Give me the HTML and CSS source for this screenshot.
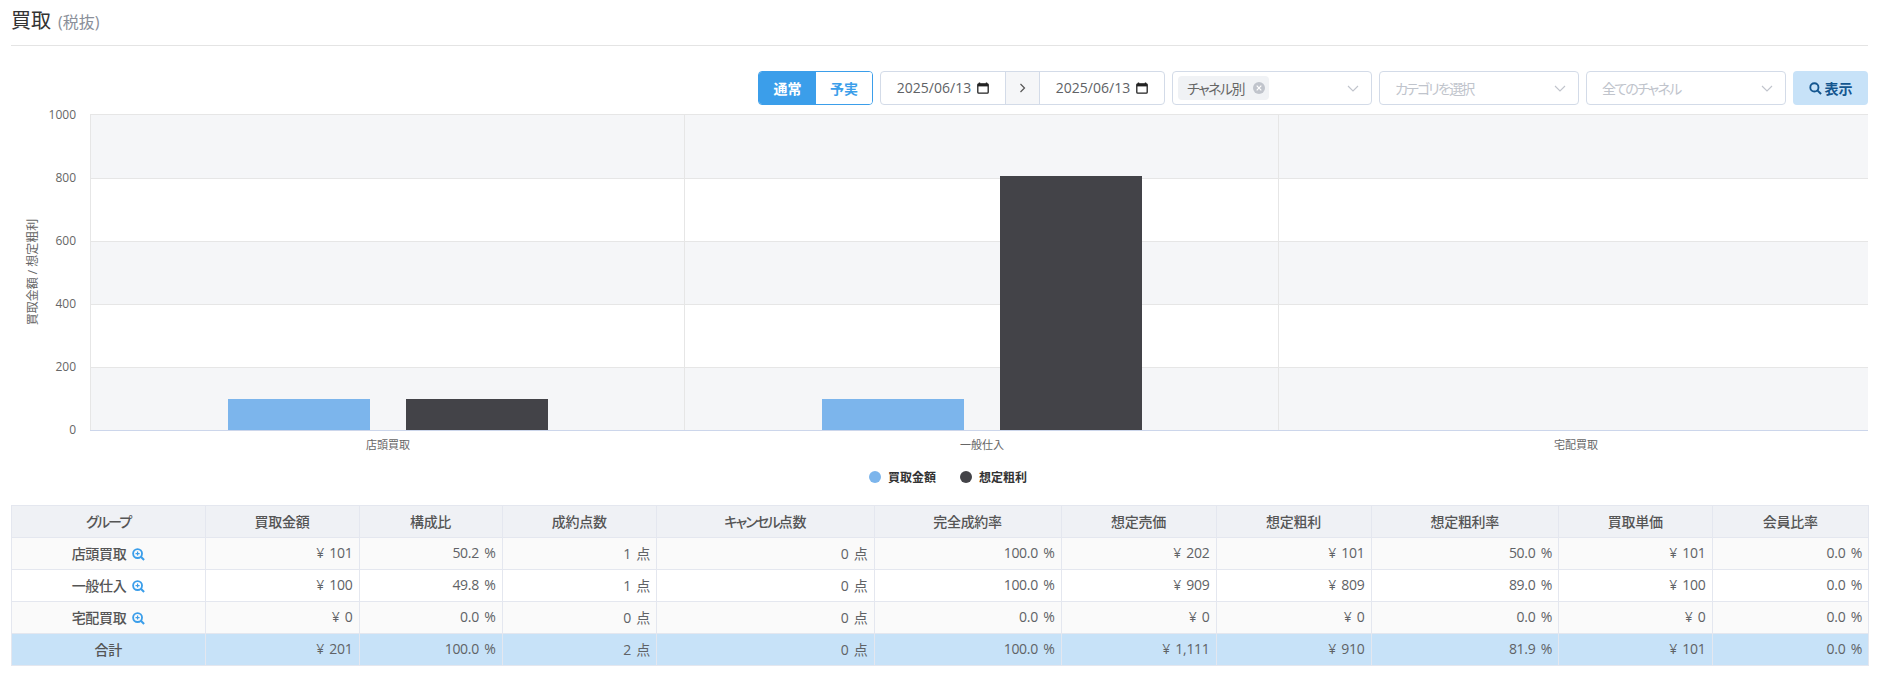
FILE: index.html
```html
<!DOCTYPE html>
<html lang="ja">
<head>
<meta charset="utf-8">
<title>買取</title>
<link rel="stylesheet" href="styles.css">
</head>
<body>
<main class="page">
  <header class="head"><h1 class="title">買取</h1><span class="sub">(税抜)</span></header>
  <div class="toolbar">
    <div class="seg"><span class="seg-on">通常</span><span class="seg-off">予実</span></div>
    <div class="dates">
      <span class="date">2025/06/13<svg class="cal" viewBox="0 0 12 12"><path d="M2.5 0.5v2M9.5 0.5v2" stroke="#222" stroke-width="1.4" fill="none"/><rect x="0.8" y="1.8" width="10.4" height="9.4" rx="1" fill="none" stroke="#222" stroke-width="1.3"/><rect x="0.8" y="1.8" width="10.4" height="2.6" fill="#222"/></svg></span>
      <span class="arrow"><svg width="7" height="10" viewBox="0 0 7 10"><path d="M1.5 1l4 4-4 4" fill="none" stroke="#555" stroke-width="1.2"/></svg></span>
      <span class="date">2025/06/13<svg class="cal" viewBox="0 0 12 12"><path d="M2.5 0.5v2M9.5 0.5v2" stroke="#222" stroke-width="1.4" fill="none"/><rect x="0.8" y="1.8" width="10.4" height="9.4" rx="1" fill="none" stroke="#222" stroke-width="1.3"/><rect x="0.8" y="1.8" width="10.4" height="2.6" fill="#222"/></svg></span>
    </div>
    <div class="select sel-a">
      <span class="chip"><span class="chip-text">チャネル別</span><svg class="chip-x" viewBox="0 0 12 12"><circle cx="6" cy="6" r="6" fill="#c0c4cc"/><path d="M3.7 3.7l4.6 4.6M8.3 3.7l-4.6 4.6" stroke="#fff" stroke-width="1.2"/></svg></span>
      <svg class="chev" viewBox="0 0 12 7"><path d="M1 1l5 5 5-5" fill="none" stroke="#c0c4cc" stroke-width="1.1"/></svg>
    </div>
    <div class="select sel-b"><span class="ph">カテゴリを選択</span><svg class="chev" viewBox="0 0 12 7"><path d="M1 1l5 5 5-5" fill="none" stroke="#c0c4cc" stroke-width="1.1"/></svg></div>
    <div class="select sel-b"><span class="ph">全てのチャネル</span><svg class="chev" viewBox="0 0 12 7"><path d="M1 1l5 5 5-5" fill="none" stroke="#c0c4cc" stroke-width="1.1"/></svg></div>
    <button class="show"><svg class="search" viewBox="0 0 14 14"><circle cx="5.8" cy="5.8" r="4.4" fill="none" stroke="#14568f" stroke-width="2"/><path d="M9 9l4 4" stroke="#14568f" stroke-width="2.2"/></svg>表示</button>
  </div>

  <svg class="chart" viewBox="0 105 1878 400" width="1878" height="400">
    <rect class="band" x="90" y="115" width="1778" height="63"/>
    <rect class="band" x="90" y="241" width="1778" height="63"/>
    <rect class="band" x="90" y="367" width="1778" height="63"/>
    <g class="grid">
      <path d="M90 114.500H1868M90 178.500H1868M90 241.500H1868M90 304.500H1868M90 367.500H1868"/>
      <path d="M90.500 114V430M684.500 114V430M1278.500 114V430"/>
    </g>
    <rect class="b1" x="228" y="399" width="142" height="31"/>
    <rect class="b2" x="406" y="399" width="142" height="31"/>
    <rect class="b1" x="822" y="399" width="142" height="31"/>
    <rect class="b2" x="1000" y="176" width="142" height="254"/>
    <path class="axis" d="M90 430.500H1868"/>
    <g class="ylab">
      <text x="76" y="119">1000</text><text x="76" y="182">800</text><text x="76" y="245">600</text>
      <text x="76" y="308">400</text><text x="76" y="371">200</text><text x="76" y="434">0</text>
    </g>
    <text class="ytitle" transform="translate(37 272) rotate(-90)">買取金額 / 想定粗利</text>
    <g class="xlab">
      <text x="388" y="449">店頭買取</text><text x="982" y="449">一般仕入</text><text x="1576" y="449">宅配買取</text>
    </g>
    <circle class="b1" cx="875" cy="477" r="6"/>
    <text class="leg" x="888" y="482">買取金額</text>
    <circle class="b2" cx="966" cy="477" r="6"/>
    <text class="leg" x="979" y="482">想定粗利</text>
  </svg>

  <table class="tbl">
    <colgroup>
      <col class="w1"><col class="w2"><col class="w3"><col class="w4"><col class="w5"><col class="w6"><col class="w7"><col class="w8"><col class="w9"><col class="w10"><col class="w11">
    </colgroup>
    <thead>
      <tr><th><span class="kana">グループ</span></th><th>買取金額</th><th>構成比</th><th>成約点数</th><th><span class="kana">キャンセル</span>点数</th><th>完全成約率</th><th>想定売価</th><th>想定粗利</th><th>想定粗利率</th><th>買取単価</th><th>会員比率</th></tr>
    </thead>
    <tbody>
      <tr><th>店頭買取 <svg class="zoom" viewBox="0 0 14 14"><circle cx="6" cy="6" r="4.8" fill="none" stroke="#3b9eea" stroke-width="2"/><path d="M9.500 9.500l3.500 3.500" stroke="#3b9eea" stroke-width="2.2"/><path d="M3.800 6h4.400M6 3.800v4.400" stroke="#3b9eea" stroke-width="1.3"/></svg></th><td>¥ 101</td><td>50.2 %</td><td>1 点</td><td>0 点</td><td>100.0 %</td><td>¥ 202</td><td>¥ 101</td><td>50.0 %</td><td>¥ 101</td><td>0.0 %</td></tr>
      <tr><th>一般仕入 <svg class="zoom" viewBox="0 0 14 14"><circle cx="6" cy="6" r="4.8" fill="none" stroke="#3b9eea" stroke-width="2"/><path d="M9.500 9.500l3.500 3.500" stroke="#3b9eea" stroke-width="2.2"/><path d="M3.800 6h4.400M6 3.800v4.400" stroke="#3b9eea" stroke-width="1.3"/></svg></th><td>¥ 100</td><td>49.8 %</td><td>1 点</td><td>0 点</td><td>100.0 %</td><td>¥ 909</td><td>¥ 809</td><td>89.0 %</td><td>¥ 100</td><td>0.0 %</td></tr>
      <tr><th>宅配買取 <svg class="zoom" viewBox="0 0 14 14"><circle cx="6" cy="6" r="4.8" fill="none" stroke="#3b9eea" stroke-width="2"/><path d="M9.500 9.500l3.500 3.500" stroke="#3b9eea" stroke-width="2.2"/><path d="M3.800 6h4.400M6 3.800v4.400" stroke="#3b9eea" stroke-width="1.3"/></svg></th><td>¥ 0</td><td>0.0 %</td><td>0 点</td><td>0 点</td><td>0.0 %</td><td>¥ 0</td><td>¥ 0</td><td>0.0 %</td><td>¥ 0</td><td>0.0 %</td></tr>
    </tbody>
    <tfoot>
      <tr><th>合計</th><td>¥ 201</td><td>100.0 %</td><td>2 点</td><td>0 点</td><td>100.0 %</td><td>¥ 1,111</td><td>¥ 910</td><td>81.9 %</td><td>¥ 101</td><td>0.0 %</td></tr>
    </tfoot>
  </table>
</main>
</body>
</html>
```
FILE: styles.css
```css
* { box-sizing: border-box; }
html, body { margin: 0; padding: 0; background: #fff; }
body {
  font-family: "Open Sans", "Noto Sans CJK JP", sans-serif;
  font-feature-settings: "palt";
  color: #606266;
  overflow: hidden;
  height: 675px;
}
.page { width: 1878px; }

.head {
  margin: 0 10px 0 11px;
  height: 46px;
  border-bottom: 1px solid #e4e4e4;
  display: flex;
  align-items: baseline;
  padding-top: 7px;
  gap: 7px;
}
.title {
  margin: 0;
  font-size: 20px;
  line-height: 28px;
  font-weight: 400;
  color: #333;
}
.sub { font-size: 16px; color: #8a8f99; }

.toolbar {
  margin: 25px 10px 0 0;
  height: 34px;
  display: flex;
  justify-content: flex-end;
  gap: 7px;
  font-size: 14px;
}
.seg {
  display: flex;
  width: 115px;
  border: 1px solid #3b9eea;
  border-radius: 4px;
  overflow: hidden;
  font-size: 14px;
  font-weight: 700;
}
.seg span { display: flex; align-items: center; justify-content: center; }
.seg-on { width: 57px; background: #3b9eea; color: #fff; }
.seg-off { flex: 1; background: #fff; color: #3b9eea; }

.dates {
  display: flex;
  width: 285px;
  border: 1px solid #d3dbe8;
  border-radius: 4px;
  overflow: hidden;
}
.date {
  flex: 1;
  display: flex;
  align-items: center;
  justify-content: center;
  gap: 6px;
  padding-bottom: 1px;
  color: #606266;
  font-size: 14px;
}
.cal { width: 12px; height: 12px; }
.arrow {
  width: 35px;
  display: flex;
  align-items: center;
  justify-content: center;
  background: #f5f6f8;
  border-left: 1px solid #d3dbe8;
  border-right: 1px solid #d3dbe8;
}

.select {
  display: flex;
  align-items: center;
  justify-content: space-between;
  border: 1px solid #d3dbe8;
  border-radius: 4px;
  background: #fff;
  padding: 0 12px 0 15px;
}
.sel-a { width: 200px; padding-left: 5px; }
.sel-b { width: 200px; }
.chip {
  height: 24px;
  width: 91px;
  background: #f0f2f5;
  border-radius: 4px;
  display: flex;
  align-items: center;
  padding-left: 9px;
  color: #666;
  font-size: 14px;
}
.chip-text { letter-spacing: -1.5px; }
.chip-x { width: 12px; height: 12px; margin-left: auto; margin-right: 4px; }
.chev { width: 12px; height: 7px; }
.ph { color: #c0c4cc; font-size: 14px; letter-spacing: -1.8px; padding-bottom: 1px; }

.show {
  width: 75px;
  border: 0;
  border-radius: 4px;
  background: #c7e2f8;
  color: #14568f;
  font: 700 14px "Open Sans", "Noto Sans CJK JP", sans-serif;
  display: flex;
  align-items: center;
  justify-content: center;
  gap: 3px;
  padding: 0;
}
.search { width: 13px; height: 13px; }

.chart { display: block; }
.chart text { font-family: "Open Sans", "Noto Sans CJK JP", sans-serif; }
.band { fill: #f5f6f8; }
.grid path { stroke: #e6e6e6; stroke-width: 1; fill: none; }
.axis { stroke: #ccd6eb; stroke-width: 1; fill: none; }
.b1 { fill: #7cb5ec; }
.b2 { fill: #434348; }
.ylab text { font-size: 12px; fill: #666; text-anchor: end; }
.xlab text { font-size: 11px; fill: #666; text-anchor: middle; }
.ytitle { font-size: 12px; fill: #666; text-anchor: middle; }
.leg { font-size: 12px; font-weight: 700; fill: #333; }

.tbl {
  margin-left: 11px;
  width: 1857px;
  table-layout: fixed;
  border-collapse: collapse;
  font-size: 14px;
  letter-spacing: -0.3px;
  word-spacing: 2px;
  color: #606266;
}
.kana { letter-spacing: -1.8px; }
.w1 { width: 193.5px; }
.w2 { width: 154px; }
.w3 { width: 143px; }
.w4 { width: 154.5px; }
.w5 { width: 217.5px; }
.w6 { width: 187px; }
.w7 { width: 155px; }
.w8 { width: 155px; }
.w9 { width: 187.5px; }
.w10 { width: 153.5px; }
.w11 { width: 156.5px; }
.tbl th, .tbl td {
  height: 32px;
  padding: 0 6px 2px;
  border: 1px solid #e4e7ef;
  white-space: nowrap;
}
.tbl th { font-weight: 500; text-align: center; color: #555; }
.tbl td { text-align: right; }
.tbl thead th { background: #eff1f5; }
.tbl tbody tr:nth-child(odd) th, .tbl tbody tr:nth-child(odd) td { background: #fafafa; }
.tbl tfoot th, .tbl tfoot td { background: #c7e2f8; }
.zoom { width: 13px; height: 13px; vertical-align: -2px; }
```
